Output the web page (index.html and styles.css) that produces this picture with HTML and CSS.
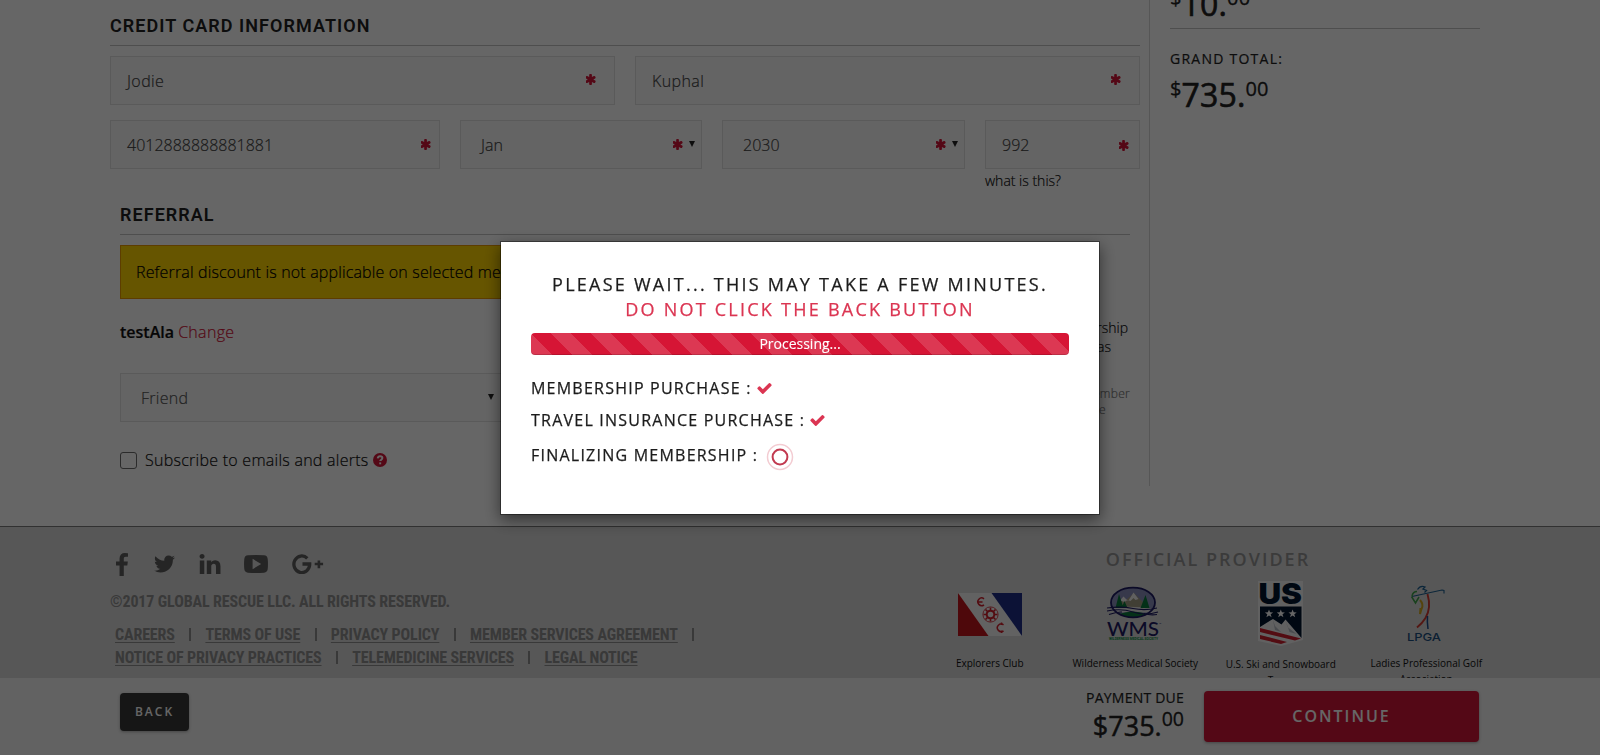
FILE: index.html
```html
<!DOCTYPE html>
<html lang="en">
<head>
<meta charset="utf-8">
<title>Checkout</title>
<link rel="stylesheet" href="styles.css">
</head>
<body>
<svg class="defs" width="0" height="0" aria-hidden="true">
  <symbol id="asterisk" viewBox="241 160 1310 1536"><path d="M1482 1082q46 26 59.5 77.5t-12.5 97.5l-64 110q-26 46-77.5 59.5t-97.5-12.5l-266-153v307q0 52-38 90t-90 38h-128q-52 0-90-38t-38-90v-307l-266 153q-46 26-97.5 12.5t-77.5-59.5l-64-110q-26-46-12.5-97.5t59.5-77.5l266-154-266-154q-46-26-59.5-77.5t12.5-97.5l64-110q26-46 77.5-59.5t97.5 12.5l266 153v-307q0-52 38-90t90-38h128q52 0 90 38t38 90v307l266-153q46-26 97.5-12.5t77.5 59.5l64 110q26 46 12.5 97.5t-59.5 77.5l-266 154z"/></symbol>
  <symbol id="check" viewBox="121 334 1550 1190"><path d="M1671 566q0 40-28 68l-724 724-136 136q-28 28-68 28t-68-28l-136-136-362-362q-28-28-28-68t28-68l136-136q28-28 68-28t68 28l294 295 656-657q28-28 68-28t68 28l136 136q28 28 28 68z"/></symbol>
  <symbol id="caret" viewBox="0 0 6 6"><path d="M0 0h6L3 6z"/></symbol>
</svg>

<main class="page">
  <section class="form">
    <h2 class="heading">CREDIT CARD INFORMATION</h2>
    <div class="row names">
      <div class="field wide">Jodie<svg class="req"><use href="#asterisk"/></svg></div>
      <div class="field wide">Kuphal<svg class="req"><use href="#asterisk"/></svg></div>
    </div>
    <div class="row card">
      <div class="field">4012888888881881<svg class="req"><use href="#asterisk"/></svg></div>
      <div class="field select">Jan<svg class="req"><use href="#asterisk"/></svg><svg class="caret"><use href="#caret"/></svg></div>
      <div class="field select">2030<svg class="req"><use href="#asterisk"/></svg><svg class="caret"><use href="#caret"/></svg></div>
      <div class="field cvv">992<svg class="req"><use href="#asterisk"/></svg></div>
    </div>
    <div class="hint">what is this?</div>

    <div class="referral">
      <h2 class="heading">REFERRAL</h2>
      <div class="alert">Referral discount is not applicable on selected membership.</div>
      <div class="columns">
        <div class="source">
          <p class="code"><b>testAla</b> <a>Change</a></p>
          <div class="field select friend">Friend<svg class="caret"><use href="#caret"/></svg></div>
          <label class="subscribe"><span class="box"></span><span class="spaced">Subscribe to emails and alerts</span>
            <svg class="help" viewBox="0 0 14 14"><circle cx="7" cy="7" r="7"/><path d="M4.7 5.3C4.9 3.9 5.8 3.2 7.1 3.2c1.300 0 2.300.8 2.300 1.900 0 1.500-2.200 1.600-2.200 3" /><path d="M7.200 9.400v1.900"/></svg>
          </label>
        </div>
        <div class="notes">
          <p>membership<br><span class="was">was</span></p>
          <p class="small">member<br><span class="the">the</span></p>
        </div>
      </div>
    </div>
  </section>

  <aside class="summary">
    <div class="price first"><sup>$</sup>10.<sup>00</sup></div>
    <div class="label">GRAND TOTAL:</div>
    <div class="price"><sup>$</sup>735.<sup>00</sup></div>
  </aside>
</main>

<footer class="footer">
  <div class="legal">
    <div class="social">
      <svg class="fb" viewBox="479 0 864 1664"><path d="M1343 12v264h-157q-86 0-116 36t-30 108v189h293l-39 296h-254v759h-306v-759h-255v-296h255v-218q0-186 104-288.500t277-102.500q147 0 228 12z"/></svg>
      <svg class="tw" viewBox="108 256 1576 1280"><path d="M1684 408q-67 98-162 167 1 14 1 42 0 130-38 259.500t-115.500 248.500-184.500 210.500-258 146-323 54.500q-271 0-496-145 35 4 78 4 225 0 401-138-105-2-188-64.500t-114-159.500q33 5 61 5 43 0 85-11-112-23-185.500-111.500t-73.500-205.500v-4q68 38 146 41-66-44-105-115t-39-154q0-88 44-163 121 149 294.500 238.500t371.500 99.500q-8-38-8-74 0-134 94.500-228.500t228.500-94.500q140 0 236 102 109-21 205-78-37 115-142 178 93-10 186-50z"/></svg>
      <svg class="li" viewBox="127 148 1537 1468"><path d="M477 625v991h-330v-991h330zm21-306q1 73-50.500 122t-135.500 49h-2q-82 0-132-49t-50-122q0-74 51.500-122.500t134.500-48.500 133 48.500 51 122.500zm1166 729v568h-329v-530q0-105-40.500-164.500t-126.500-59.500q-63 0-105.500 34.500t-63.500 85.500q-11 30-11 81v553h-329q2-399 2-647t-1-296l-1-48h329v144h-2q20-32 41-56t56.500-52 87-43.500 114.500-15.500q171 0 275 113.500t104 332.500z"/></svg>
      <svg class="yt" viewBox="0 0 24 18"><path fill-rule="evenodd" d="M4 .3Q12-.3 20 .3 23.400.5 23.700 4q.5 5 0 10-.3 3.400-3.700 3.700-8 .5-16 0Q.6 17.400.3 14-.2 9 .3 4 .6.500 4 .3ZM8.600 3.800v10.400L17.200 9Z"/></svg>
      <svg class="gp" viewBox="0 0 32 20"><path class="line" d="M15.300 4.300A7.900 8.300 0 1 0 17.700 10H10.500"/><path d="M25.600 6.500h2.600v2.300h2.900v2.500h-2.900v2.900h-2.600v-2.900h-2.900V8.800h2.900z"/></svg>
    </div>
    <p class="copy">©2017 GLOBAL RESCUE LLC. ALL RIGHTS RESERVED.</p>
    <nav class="links">
      <span><a>CAREERS</a></span><span><a>TERMS OF USE</a></span><span><a>PRIVACY POLICY</a></span><span><a>MEMBER SERVICES AGREEMENT</a></span>
    </nav>
    <nav class="links">
      <span><a>NOTICE OF PRIVACY PRACTICES</a></span><span><a>TELEMEDICINE SERVICES</a></span><span class="last"><a>LEGAL NOTICE</a></span>
    </nav>
  </div>
  <div class="providers">
    <h3>OFFICIAL PROVIDER</h3>
    <div class="logos">
      <figure>
        <svg width="64" height="66" viewBox="0 0 64 66">
          <path fill="#f4f4f4" d="M0 12h64v43H0z"/><path fill="#c4161c" d="M0 12l30.500 43H0z"/><path fill="#1f2f88" d="M33.500 12H64v43z"/>
          <g fill="none" stroke="#d0202c" stroke-width="1.500"><path d="M26 17.800a3.800 3.800 0 1 0 0 6M19.500 21H24.500"/><path d="M45.500 43.800a3.800 3.800 0 1 0 0 6M43.500 41.500v2.500M43.500 49.500v2.500"/><circle cx="32.500" cy="33.500" r="7.600" stroke-width=".8"/><circle cx="32.500" cy="33.500" r="3.800" stroke-width="2"/><path stroke-width="1.600" d="M32.500 26.500v3M32.500 37.500v3M25.500 33.500h3M36.500 33.500h3M27.500 28.500l2 2M35.500 36.500l2 2M37.500 28.500l-2 2M29.500 36.500l-2 2"/></g>
        </svg>
        <figcaption>Explorers Club</figcaption>
      </figure>
      <figure>
        <svg width="58" height="66" viewBox="0 0 58 66">
          <ellipse cx="27" cy="21.500" rx="22" ry="14.800" fill="#8a90bb"/>
          <path fill="#a39d85" d="M9 28l8-11 3 2 8-7 9 9 4 7z"/><path fill="#f0f0f0" d="M14 19.500l3.500-4 3 3 2 1 5-8 5 6.500-3 1-2-2-3 3-3-1-3 2z"/>
          <path fill="#e4e4e4" d="M7 26.500q20-2 41 1l-2 4H9z"/>
          <path fill="#0a7a3c" d="M13 13l-3.500 14h8zM18.500 20l-3 7h6zM39.500 14l-5 13h9zM13 33q14-5 28 0-6 3.500-14 3.500T13 33z"/>
          <ellipse cx="27" cy="21.500" rx="22" ry="14.800" fill="none" stroke="#1d1a63" stroke-width="1.800"/>
          <path fill="none" stroke="#1d1a63" stroke-width="1.100" d="M1 27q14-2 26 .5t24-.5M1 30q14-3 26 1t25 0M3 33.500q8-3 13-2.500M38 32.500q6 2 13 1"/>
          <text x="1" y="55" class="wms" textLength="52" lengthAdjust="spacingAndGlyphs">WMS</text><text x="53" y="44" font-size="3" fill="#1d1a63">™</text>
          <text x="3" y="58.500" class="wmssub" textLength="49" lengthAdjust="spacingAndGlyphs">WILDERNESS MEDICAL SOCIETY</text>
        </svg>
        <figcaption>Wilderness Medical Society</figcaption>
      </figure>
      <figure class="ski">
        <svg width="46" height="66" viewBox="0 0 46 66">
          <path fill="#f2f2f2" d="M0 0h45v59L23 65 0 60z"/>
          <text x="0.500" y="22.500" class="us" textLength="43.500" lengthAdjust="spacingAndGlyphs">US</text>
          <path fill="#00152f" d="M2 25.500H43.500V57L27.500 38.500l-4 5-8.500-5.500L2 46z"/>
          <path fill="#fff" d="M11 28.500l1.100 2.800 3 .1-2.400 1.900.9 2.900-2.600-1.700-2.600 1.700.9-2.900-2.400-1.900 3-.1zM22.800 28.500l1.100 2.800 3 .1-2.400 1.900.9 2.900-2.600-1.700-2.600 1.700.9-2.900-2.400-1.900 3-.1zM34.600 28.500l1.100 2.800 3 .1-2.400 1.900.9 2.900-2.600-1.700-2.600 1.700.9-2.900-2.400-1.900 3-.1z"/>
          <path fill="#b9bec6" d="M15 39l2 6 6 6-6-2zM27.500 39l2 7 9 7-7-2z"/>
          <path fill="#cf1f2e" d="M2 47L43 57.500l-6 2L2 51zM2 54L29 61l-6 2L2 58z"/>
        </svg>
        <figcaption>U.S. Ski and Snowboard<br>Team</figcaption>
      </figure>
      <figure>
        <svg width="40" height="66" viewBox="0 0 40 66">
          <g fill="none" stroke-width="1.500"><path stroke="#1c5f90" stroke-width="1.100" d="M6 15.500Q20 12.500 36 9l2 .5v3"/><path stroke="#1c5f90" stroke-width="1.300" d="M11.500 8.500q3-4.500 7.500-2.500l-2 2 3.500 1.500-2 2"/><path stroke="#3fa34a" d="M5.500 15.500l4 6.500 3.500-6M6 15q1-4.500 5-4.500"/><path stroke="#d4a920" stroke-width="2" d="M14 19q4 4.500 1.500 9l-1.500 5 .5-6"/><path stroke="#d23a30" stroke-width="1.900" d="M21.500 13q4 14-2 24-3 5-8.500 9.500"/><path stroke="#1c4f90" stroke-width="1.500" d="M21.500 35q-.5 6 .5 13"/></g>
          <text x="1" y="59.500" class="lpga" textLength="34" lengthAdjust="spacingAndGlyphs">LPGA</text>
        </svg>
        <figcaption>Ladies Professional Golf<br>Association</figcaption>
      </figure>
    </div>
  </div>
</footer>

<div class="actions">
  <button class="back">BACK</button>
  <div class="due"><div class="due-label">PAYMENT DUE</div><div class="due-price">$735.<sup>00</sup></div></div>
  <button class="continue">CONTINUE</button>
</div>

<div class="overlay">
  <div class="modal">
    <div class="title">PLEASE WAIT... THIS MAY TAKE A FEW MINUTES.</div>
    <div class="title warn">DO NOT CLICK THE BACK BUTTON</div>
    <div class="progress">Processing...</div>
    <div class="step">MEMBERSHIP PURCHASE :<svg class="tick"><use href="#check"/></svg></div>
    <div class="step">TRAVEL INSURANCE PURCHASE :<svg class="tick"><use href="#check"/></svg></div>
    <div class="step final">FINALIZING MEMBERSHIP :<svg class="spin" viewBox="0 0 28 28"><circle cx="14" cy="14" r="12.500" stroke="#f3ccd2" stroke-width="1.500"/><circle cx="14" cy="14" r="7.400" stroke="#c23a50" stroke-width="2"/></svg></div>
  </div>
</div>
</body>
</html>
```
FILE: styles.css
```css
* { box-sizing: border-box; }
body {
  margin: 0;
  height: 755px;
  overflow: hidden;
  background: #fff;
  color: #222;
  font: 300 16px/24px "Open Sans", sans-serif;
}
h2, h3, p, figure { margin: 0; }
svg { flex: none; display: block; -webkit-text-stroke: 0; }
.defs { position: absolute; }

.page { display: flex; height: 526px; padding-left: 110px; }
.form { width: 1040px; height: 486px; padding: 16px 9px 0 0; border-right: 1px solid #d8d8d8; -webkit-text-stroke: .2px; }
.heading {
  padding-bottom: 9px;
  border-bottom: 1px solid #c3c3c3;
  margin-bottom: 10px;
  font: 600 18px/20px Roboto, sans-serif;
  letter-spacing: 1.05px;
  color: #222;
  -webkit-text-stroke: 0;
}
.row { display: grid; gap: 20px; margin-bottom: 15px; }
.names { grid-template-columns: 505px 505px; }
.card { grid-template-columns: 330px 242px 243px 155px; margin-bottom: 2px; }
.field {
  display: flex;
  align-items: center;
  height: 49px;
  padding: 0 8px 0 16px;
  border: 1px solid #e2e2e2;
  background: #fbfbfb;
  color: #444;
}
.wide { padding-right: 18px; letter-spacing: .4px; }
.wide .req { margin-bottom: 2px; }
.cvv { padding-right: 10px; }
.cvv .req { margin-top: 3px; }
.select { padding: 0 6px 0 20px; }
.req { width: 10px; height: 11px; margin: 0 0 1px auto; fill: #d31638; }
.select .req { margin-right: 6px; }
.caret { width: 6px; height: 6px; fill: #222; margin: 0 0 2px; }
.select .caret { margin-right: 0; }
.hint { padding-left: 875px; height: 34px; font-size: 14px; line-height: 19px; color: #111; }

.referral { margin: 0 10px; }
.alert { width: 660px; height: 54px; padding: 14px 15px; border: 1px solid #e89a00; background: #ffd400; color: #000; letter-spacing: .16px; }
.columns { display: flex; justify-content: space-between; }
.code { padding: 21px 0 29px; color: #111; }
.code b { font-weight: 600; }
.code a { color: #d31638; letter-spacing: .3px; }
.friend { width: 384px; color: #555; letter-spacing: .3px; }
.friend .caret { margin-left: auto; margin-right: 3px; }
.subscribe { display: flex; align-items: center; margin-top: 26px; color: #111; }
.spaced { letter-spacing: .26px; }
.box { width: 17px; height: 17px; margin: 0 8px 0 0; border: 1px solid #6b6b6b; border-radius: 3px; background: #fff; }
.help { width: 14px; height: 14px; margin-left: 4px; fill: #d31638; }
.help path { fill: none; stroke: #fff; stroke-width: 1.9px; }
.notes { padding-top: 19px; text-align: right; font-size: 14px; line-height: 19px; color: #111; }
.notes p { padding-right: 2px; }
.was { padding-right: 17px; }
.notes .small { margin-top: 30px; font-size: 12px; line-height: 16px; letter-spacing: .3px; padding-right: 0; color: #777; }
.the { padding-right: 24px; }

.summary { width: 310px; margin-left: 20px; color: #222; }
.label { height: 20px; font: 400 14px/20px "Open Sans", sans-serif; letter-spacing: 1.25px; -webkit-text-stroke: .2px; }
.price { font: 400 32px/44px "Open Sans", sans-serif; margin-top: 4px; height: 44px; letter-spacing: .15px; -webkit-text-stroke: .65px; }
.price sup { font-size: 20px; line-height: 0; vertical-align: 11.5px; -webkit-text-stroke: .3px; }
.price.first { height: 45px; margin: -16px 0 20px; line-height: 40px; border-bottom: 1px solid #c3c3c3; }

.footer { display: flex; justify-content: space-between; height: 152px; overflow: hidden; border-top: 1px solid #7b7b7b; background: #d9d9d9; padding: 0 101px 0 110px; }
.legal { font-family: "Roboto Condensed", Roboto, sans-serif; font-stretch: 75%; font-weight: 700; color: #8f8f8f; letter-spacing: -.12px; }
.social { display: flex; align-items: center; height: 48px; padding: 26px 0 0 6px; fill: #5c5c5c; }
.fb { width: 12px; height: 23px; margin-right: 26px; }
.tw { width: 21px; height: 18px; margin-right: 24px; }
.li { width: 22px; height: 20px; margin-right: 23px; }
.yt { width: 24px; height: 18px; margin-right: 24px; }
.gp { width: 32px; height: 20px; }
.gp .line { fill: none; stroke: #5c5c5c; stroke-width: 3.3px; }
.copy { padding-top: 15px; height: 48px; line-height: 24px; }
.links { display: flex; height: 23px; line-height: 23px; padding-left: 5px; align-items: center; letter-spacing: -.13px; }
.links span { display: flex; align-items: center; }
.links span::after { content: ""; width: 2px; height: 13px; margin: 0 14.300px; background: #8f8f8f; }
.links .last::after { content: none; }
.links a { text-decoration: underline; text-underline-offset: 2px; text-decoration-thickness: 1px; text-decoration-skip-ink: none; }

.providers { width: 582px; padding-top: 20px; }
.providers h3 { height: 25px; text-align: center; font: 600 18px/25px "Open Sans", sans-serif; letter-spacing: 2px; color: #959595; }
.logos { display: grid; grid-template-columns: repeat(4, 1fr); padding-top: 9px; }
figure { display: flex; flex-direction: column; align-items: center; font-size: 10px; line-height: 16px; font-weight: 400; color: #111; text-align: center; }
figcaption { padding-top: 8px; }
.ski figcaption { padding-top: 9px; }
.wms { font: 500 19px Lato, sans-serif; fill: #1d1a63; }
.wmssub { font: 700 3px Roboto, sans-serif; fill: #0a8a3c; }
.us { font: 900 29px Inter, sans-serif; fill: #00152f; }
.lpga { font: 500 11px Inter, sans-serif; fill: #1c4f80; }

.actions { display: flex; height: 77px; padding: 0 121px 0 120px; background: #f4f4f4; }
button { border: 0; border-radius: 4px; font-family: "Open Sans", sans-serif; font-weight: 600; color: #fff; box-shadow: 0 1px 3px rgba(0, 0, 0, .3); }
.back { width: 69px; height: 38px; margin-top: 15px; padding: 0 0 2px; background: #383838; font-size: 12px; letter-spacing: 2px; }
.continue { width: 275px; height: 51px; margin-top: 13px; padding: 0 0 2px; background: #d31638; font-size: 16px; letter-spacing: 2px; }
.due { margin: 10px 20px 0 auto; text-align: right; color: #222; }
.due-label { font: 400 14px/20px "Open Sans", sans-serif; letter-spacing: .22px; -webkit-text-stroke: .2px; }
.due-price { font: 400 27px/35px "Open Sans", sans-serif; -webkit-text-stroke: .5px; }
.due-price sup { font-size: 19.500px; line-height: 0; vertical-align: 10px; -webkit-text-stroke: .3px; }

.overlay { position: fixed; inset: 0; background: rgba(0, 0, 0, .6); padding-top: 241px; }
.modal { width: 600px; height: 274px; margin: 0 auto; padding: 30px; border: 1px solid rgba(0, 0, 0, .4); background: #fff; background-clip: padding-box; box-shadow: 0 5px 15px rgba(0, 0, 0, .5); font-weight: 400; color: #1c1c1c; -webkit-text-stroke: .25px; }
.title { text-align: center; font-size: 18px; line-height: 25px; letter-spacing: 2.25px; }
.warn { color: #db3552; }
.progress { width: 538px; height: 22px; margin-top: 11px; border-radius: 4px; text-align: center; color: #fff; font-size: 14px; line-height: 21px; -webkit-text-stroke: .1px; box-shadow: inset 0 -1px 0 rgba(0, 0, 0, .15); background: linear-gradient(45deg, rgba(255, 255, 255, .15) 25%, transparent 25%, transparent 50%, rgba(255, 255, 255, .15) 50%, rgba(255, 255, 255, .15) 75%, transparent 75%) 20px 0 / 40px 40px #d61535; }
.step { display: flex; align-items: center; height: 32px; letter-spacing: 1.230px; }
.progress + .step { margin-top: 17px; }
.tick { width: 15px; height: 11px; margin-left: 5px; fill: #db3552; }
.final { margin-top: 3px; }
.spin { width: 28px; height: 28px; margin: 3px 0 0 8px; fill: none; }
```
